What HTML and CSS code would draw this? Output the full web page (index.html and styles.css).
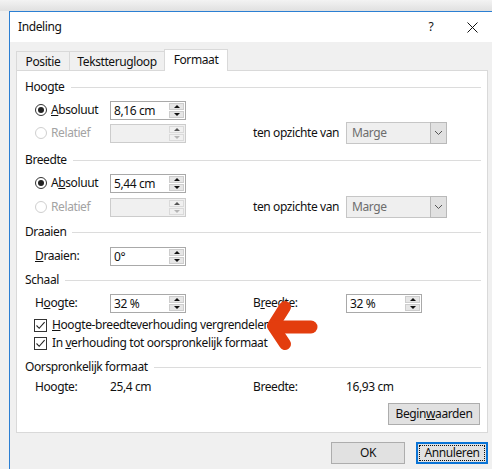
FILE: index.html
```html
<!DOCTYPE html>
<html>
<head>
<meta charset="utf-8">
<link rel="stylesheet" href="styles.css">
</head>
<body>
<div class="dialog">
  <div class="titlebar">
    <span class="title">Indeling</span>
    <span class="help">?</span>
    <svg class="close" width="11" height="11" viewBox="0 0 11 11"><path d="M0.5 0.5 L10.5 10.5 M10.5 0.5 L0.5 10.5" stroke="#111" stroke-width="1" fill="none"/></svg>
  </div>
  <div class="client">
    <div class="tabs">
      <div class="tab t1">Positie</div>
      <div class="tab t2">Tekstterugloop</div>
      <div class="tab t3 active">Formaat</div>
    </div>
    <div class="panel">
      <div class="ghead">Hoogte</div>
      <div class="row mt5">
        <div class="opt"><span class="radio on"></span><span><u>A</u>bsoluut</span></div>
        <div class="spin"><span class="val">8,16 cm</span><span class="arrows"><i class="up"></i><i class="down"></i></span></div>
      </div>
      <div class="row tall mt2">
        <div class="opt disabled"><span class="radio"></span><span>Relatief</span></div>
        <div class="spin off"><span class="val"></span><span class="arrows"><i class="up"></i><i class="down"></i></span></div>
        <div></div>
        <div class="lbl">ten opzichte van</div>
        <div class="select"><span class="txt">Marge</span><span class="drop"><svg width="9" height="6" viewBox="0 0 9 6"><path d="M1 1 L4.5 4.5 L8 1" stroke="#555" stroke-width="1" fill="none"/></svg></span></div>
      </div>

      <div class="ghead mt8">Breedte</div>
      <div class="row mt5">
        <div class="opt"><span class="radio on"></span><span>A<u>b</u>soluut</span></div>
        <div class="spin"><span class="val">5,44 cm</span><span class="arrows"><i class="up"></i><i class="down"></i></span></div>
      </div>
      <div class="row tall mt3">
        <div class="opt disabled"><span class="radio"></span><span>Relatief</span></div>
        <div class="spin off"><span class="val"></span><span class="arrows"><i class="up"></i><i class="down"></i></span></div>
        <div></div>
        <div class="lbl">ten opzichte van</div>
        <div class="select"><span class="txt">Marge</span><span class="drop"><svg width="9" height="6" viewBox="0 0 9 6"><path d="M1 1 L4.5 4.5 L8 1" stroke="#555" stroke-width="1" fill="none"/></svg></span></div>
      </div>

      <div class="ghead mt6">Draaien</div>
      <div class="row mt6">
        <div class="lbl"><u>D</u>raaien:</div>
        <div class="spin"><span class="val">0°</span><span class="arrows"><i class="up"></i><i class="down"></i></span></div>
      </div>

      <div class="ghead mt6">Schaal</div>
      <div class="row mt5">
        <div class="lbl">H<u>o</u>ogte:</div>
        <div class="spin"><span class="val">32 %</span><span class="arrows"><i class="up"></i><i class="down"></i></span></div>
        <div></div>
        <div class="lbl">B<u>r</u>eedte:</div>
        <div class="spin"><span class="val">32 %</span><span class="arrows"><i class="up"></i><i class="down"></i></span></div>
      </div>
      <div class="check mt3"><span class="box"><svg width="11" height="11" viewBox="0 0 11 11"><path d="M1.5 5.5 L4.2 8.3 L9.6 2.2" stroke="#222" stroke-width="1.1" fill="none"/></svg></span><span><u>H</u>oogte-breedteverhouding vergrendelen</span></div>
      <div class="check"><span class="box"><svg width="11" height="11" viewBox="0 0 11 11"><path d="M1.5 5.5 L4.2 8.3 L9.6 2.2" stroke="#222" stroke-width="1.1" fill="none"/></svg></span><span>In <u>v</u>erhouding tot oorspronkelijk formaat</span></div>

      <div class="ghead mt7">Oorspronkelijk formaat</div>
      <div class="row info mt3">
        <div class="lbl">Hoogte:</div>
        <div>25,4 cm</div>
        <div></div>
        <div class="lbl">Breedte:</div>
        <div>16,93 cm</div>
      </div>
      <div class="reset mt7"><button class="btn wide">Begin<u>w</u>aarden</button></div>
    </div>
    <div class="footer">
      <button class="btn ok">OK</button>
      <button class="btn cancel">Annuleren</button>
    </div>
  </div>
</div>
<svg class="annot" width="492" height="469" viewBox="0 0 492 469">
  <g stroke="#e33d0e" stroke-linecap="round" stroke-linejoin="round" fill="none">
    <path d="M285 307 L273 326 L285 344" stroke-width="12"/>
    <path d="M276 327 L311 327" stroke-width="13"/>
  </g>
</svg>
</body>
</html>
```

FILE: styles.css
```css
* { box-sizing: border-box; }

body {
  margin: 0;
  width: 492px;
  height: 469px;
  overflow: hidden;
  position: relative;
  background: linear-gradient(#f3f3f3, #e0e0e0 11px, #f0f0f0 11px);
  font-family: "Noto Sans", "Open Sans", sans-serif;
  font-size: 12px;
  letter-spacing: -0.4px;
  line-height: 16px;
  color: #111;
}

.dialog {
  margin: 11px 0 0 9px;
  width: 501px;
  height: 470px;
  border-top: 1px solid #2b7fd3;
  border-left: 1px solid #2b7fd3;
  background: #f0f0f0;
}

.titlebar {
  height: 30px;
  background: #fff;
  display: flex;
  align-items: center;
  padding-left: 8px;
}
.title { flex: 1; }
.help { width: 10px; text-align: center; margin-right: 31px; }
.close { margin-right: 32px; }

.client { padding: 7px 0 0 6px; }

.tabs {
  display: flex;
  align-items: flex-end;
  height: 21px;
}
.tab {
  height: 19px;
  border: 1px solid #d9d9d9;
  border-bottom: none;
  background: #f0f0f0;
  text-align: center;
  line-height: 18px;
  padding-top: 1px;
}
.t1 { width: 54px; }
.t2 { width: 96px; margin-left: -1px; }
.t3 { width: 64px; margin-left: -1px; }
.tab.active {
  height: 22px;
  margin-bottom: -1px;
  background: #fff;
  position: relative;
  z-index: 1;
  padding-top: 1px;
}

.panel {
  width: 472px;
  height: 363px;
  border: 1px solid #d9d9d9;
  background: #fff;
  padding: 8px 6px 0 8px;
}

.ghead {
  height: 16px;
  display: flex;
  align-items: center;
  gap: 6px;
}
.ghead::after {
  content: "";
  flex: 1;
  height: 1px;
  background: #dcdcdc;
}

.mt2 { margin-top: 2px; }
.mt3 { margin-top: 3px; }
.mt5 { margin-top: 5px; }
.mt6 { margin-top: 6px; }
.mt7 { margin-top: 7px; }
.mt8 { margin-top: 8px; }

.row {
  display: grid;
  grid-template-columns: 75px 76px 67px 93px 101px;
  align-items: center;
  padding-left: 10px;
  height: 20px;
}
.row.tall { height: 22px; }
.row.info { height: 18px; }

.opt { display: flex; align-items: center; gap: 4px; }
.opt.disabled { color: #a3a3a3; }

.radio {
  width: 12px;
  height: 12px;
  border: 1px solid #333;
  border-radius: 50%;
  display: flex;
  align-items: center;
  justify-content: center;
  background: #fff;
}
.radio.on::after {
  content: "";
  width: 6px;
  height: 6px;
  border-radius: 50%;
  background: #222;
}
.disabled .radio { border-color: #cfcfcf; }

.spin {
  width: 76px;
  height: 19px;
  border: 1px solid #a9a9a9;
  background: #fff;
  display: flex;
  align-items: stretch;
}
.spin .val { flex: 1; padding-left: 3px; line-height: 17px; }
.spin .arrows {
  width: 15px;
  margin: 1px;
  display: flex;
  flex-direction: column;
  gap: 1px;
}
.arrows i {
  flex: 1;
  background: #e6e6e6;
  border: 1px solid #cdcdcd;
  display: flex;
  align-items: center;
  justify-content: center;
}
.arrows i::after {
  content: "";
  border-left: 3px solid transparent;
  border-right: 3px solid transparent;
}
.arrows .up::after { border-bottom: 3px solid #111; }
.arrows .down::after { border-top: 3px solid #111; }
.spin.off { background: #f0f0f0; border-color: #cccccc; }
.spin.off .arrows i { background: #f0f0f0; border-color: #dadada; }
.spin.off .arrows .up::after { border-bottom-color: #555; }
.spin.off .arrows .down::after { border-top-color: #b5b5b5; }

.select {
  width: 101px;
  height: 22px;
  border: 1px solid #c6c6c6;
  background: #efefef;
  display: flex;
  color: #6d6d6d;
}
.select .txt { flex: 1; padding-left: 5px; line-height: 20px; }
.select .drop {
  width: 17px;
  border: 1px solid #b9b9b9;
  margin: -1px -1px -1px 0;
  background: #e1e1e1;
  display: flex;
  align-items: center;
  justify-content: center;
}

.check {
  height: 18px;
  display: flex;
  align-items: center;
  gap: 5px;
  padding-left: 9px;
}
.box {
  width: 13px;
  height: 13px;
  border: 1px solid #333;
  background: #fff;
  display: flex;
  align-items: center;
  justify-content: center;
}

.reset { display: flex; justify-content: flex-end; padding-right: 1px; }

.btn {
  font: inherit;
  letter-spacing: inherit;
  color: #111;
  height: 22px;
  border: 1px solid #adadad;
  background: #e1e1e1;
  padding: 0;
  line-height: 18px;
}
.btn.wide { width: 92px; }

.footer {
  width: 472px;
  margin-top: 9px;
  display: flex;
  justify-content: flex-end;
  gap: 11px;
}
.btn.ok { width: 74px; }
.btn.cancel {
  width: 72px;
  border: 2px solid #0a74d6;
  outline: 1px dotted #111;
  outline-offset: -4px;
}

.annot {
  position: absolute;
  left: 0;
  top: 0;
  pointer-events: none;
}
```
